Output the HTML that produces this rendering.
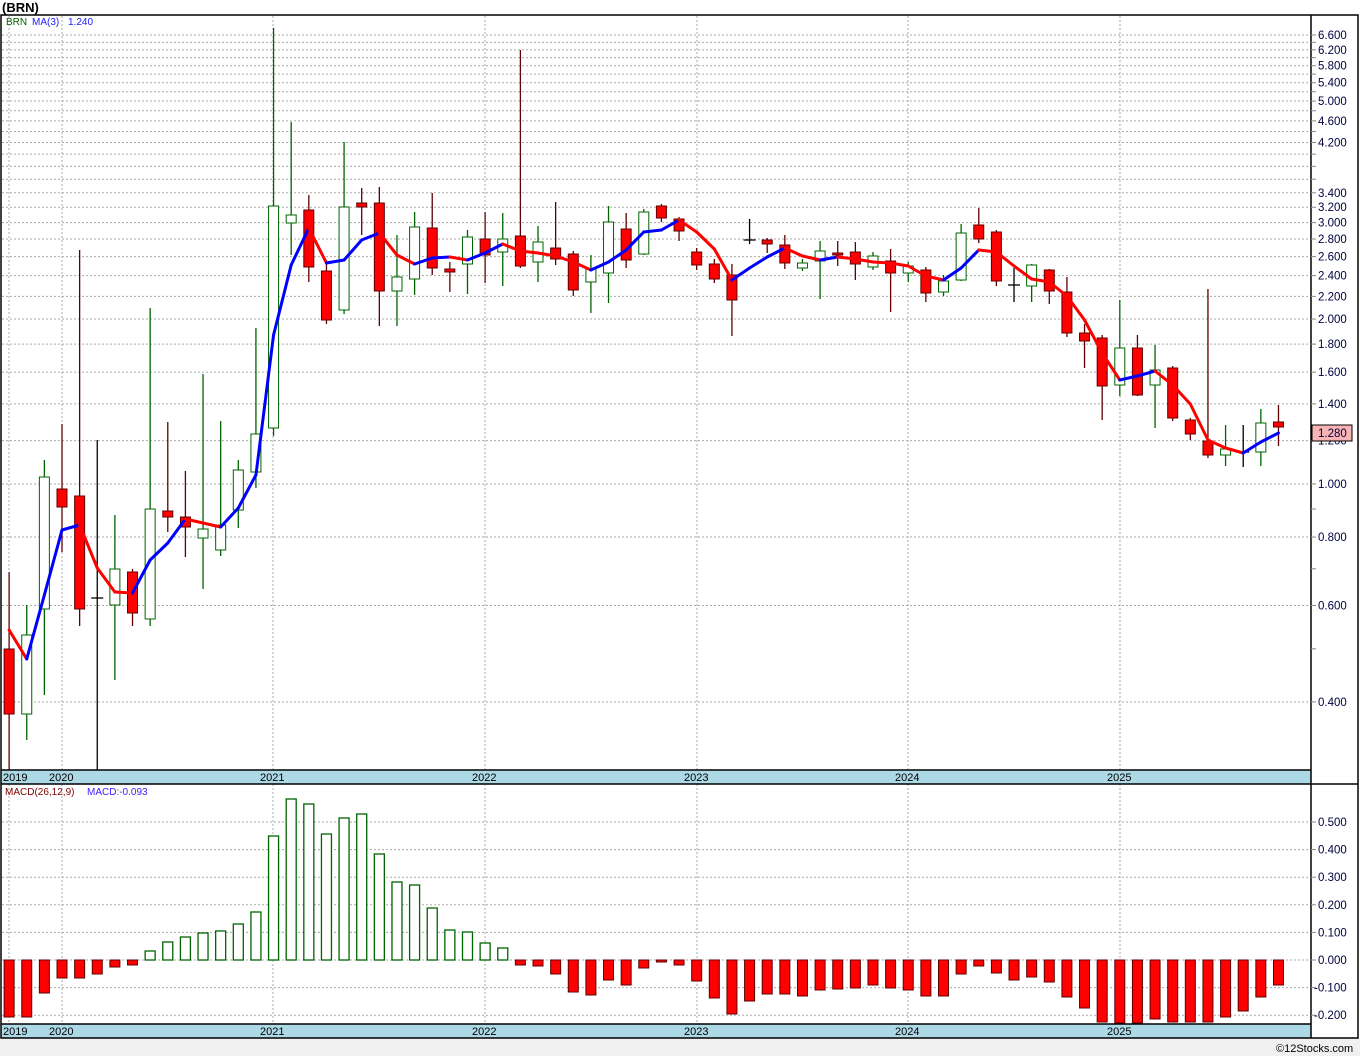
<!DOCTYPE html>
<html><head><meta charset="utf-8"><style>
html,body{margin:0;padding:0;background:#fff;}
body{width:1360px;height:1056px;overflow:hidden;font-family:"Liberation Sans",sans-serif;}
svg{display:block}
</style></head><body>
<svg id="s" width="1360" height="1056" xmlns="http://www.w3.org/2000/svg" font-family="Liberation Sans, sans-serif">
<rect x="0" y="0" width="1360" height="1056" fill="#fff"/>
<rect x="0" y="1038" width="1360" height="18" fill="#f0f0f0"/>
<text x="2" y="12" font-size="13" font-weight="bold" fill="#000">(BRN)</text>
<g id="grid"></g>
<g id="cand"></g>
<g id="ma"></g>
<g id="macd"></g>
<rect x="1" y="770" width="1310" height="14" fill="#add8e6"/>
<rect x="1" y="1024" width="1310" height="14" fill="#add8e6"/>
<g font-size="11" fill="#000">
<text x="3" y="781">2019</text><text x="49" y="781">2020</text><text x="260" y="781">2021</text><text x="472" y="781">2022</text><text x="684" y="781">2023</text><text x="895" y="781">2024</text><text x="1107" y="781">2025</text>
<text x="3" y="1035">2019</text><text x="49" y="1035">2020</text><text x="260" y="1035">2021</text><text x="472" y="1035">2022</text><text x="684" y="1035">2023</text><text x="895" y="1035">2024</text><text x="1107" y="1035">2025</text>
</g>
<g fill="none" stroke="#000" stroke-width="1.5">
<rect x="1" y="15" width="1357" height="1023"/>
<line x1="1" y1="770" x2="1311" y2="770"/>
<line x1="1" y1="784" x2="1358" y2="784"/>
<line x1="1" y1="1024" x2="1311" y2="1024"/>
<line x1="1311" y1="15" x2="1311" y2="1038"/>
</g>
<text x="6" y="25" font-size="10" fill="#006400">BRN</text>
<text x="32" y="25" font-size="10" fill="#2020ff">MA(3)</text>
<text x="68" y="25" font-size="10" fill="#2020ff">1.240</text>
<text x="5" y="795" font-size="10" fill="#800000">MACD(26,12,9)</text>
<text x="87" y="795" font-size="10" fill="#4020ff">MACD:-0.093</text>
<g id="axis" font-size="11.5" fill="#000040"></g>
<rect x="1312" y="425" width="40" height="16" fill="#f8b4b4" stroke="#000" stroke-width="1"/>
<text x="1318" y="437" font-size="11.5" fill="#000040">1.280</text>
<text x="1276" y="1052" font-size="11" fill="#000">©12Stocks.com</text>
</svg>
<script>
var NS="http://www.w3.org/2000/svg";
function el(p,t,a){var e=document.createElementNS(NS,t);for(var k in a)e.setAttribute(k,a[k]);document.getElementById(p).appendChild(e);return e;}
function py(p){return 35+(Math.log10(6.6)-Math.log10(p))*547.8;}
var grid="grid",ax="axis";
// price grid
for(var v=4;v<=66;v+=2){var p=v/10,y=py(p);
 el(grid,"line",{x1:2,x2:1310,y1:y,y2:y,stroke:"#aaa","stroke-dasharray":"2,2","stroke-width":1});
 el(ax,"line",{x1:1311,x2:1316,y1:y,y2:y,stroke:"#888"});
 var lab=[4,6,8,10,12,14,16,18,20,22,24,26,28,30,32,34,42,46,50,54,58,62,66];
 if(lab.indexOf(v)>=0){var t=el(ax,"text",{x:1318,y:y+4});t.textContent=p.toFixed(3);}
}
[0.5,0.7,0.9].forEach(function(p){var y=py(p);el(ax,"line",{x1:1311,x2:1316,y1:y,y2:y,stroke:"#888"});});
// vertical grid
[9,62,273,485,697,908,1120].forEach(function(x){
 el(grid,"line",{x1:x,x2:x,y1:16,y2:770,stroke:"#aaa","stroke-dasharray":"2,2"});
 el(grid,"line",{x1:x,x2:x,y1:784,y2:1038,stroke:"#aaa","stroke-dasharray":"2,2"});
});
// macd grid
for(var k=-2;k<=5;k++){var y=960-k*27.6;
 el(grid,"line",{x1:2,x2:1310,y1:y,y2:y,stroke:"#aaa","stroke-dasharray":"2,2"});
 el(ax,"line",{x1:1311,x2:1316,y1:y,y2:y,stroke:"#888"});
 var t=el(ax,"text",{x:k<0?1314:1318,y:y+4});t.textContent=(k<0?"-":"")+(Math.abs(k)/10).toFixed(3);
}
// candles: [type, bodyTop, bodyBot, wickTop, wickBot] type u=up d=down x=doji
var C=[["d",649,714,572,770],["u",635,714,605,740],["u",477,609,460,695],["d",489,507,424,552],["d",496,609,250,626],["x",598,598,440,770],
["u",569,605,515,680],["d",572,613,569,626],["u",509,619,308,626],["d",511,517,422,532],["d",517,527,471,557],["u",529,538,374,589],
["u",525,550,421,556],["u",470,510,460,528],["u",434,472,328,488],["u",206,428,28,436],["u",215,223,122,255],["d",210,267,195,282],
["d",271,320,260,324],["u",207,310,142,314],["d",203,207,188,235],["d",203,291,187,326],["u",277,291,235,326],["u",227,279,212,295],
["d",228,268,193,275],["d",269,272,262,292],["u",237,264,230,294],["d",239,255,212,283],["u",239,252,213,286],["d",236,266,50,268],
["u",242,262,226,282],["d",248,259,202,265],["d",254,290,251,296],["u",269,282,255,313],["u",222,273,206,303],["d",229,260,213,268],
["u",212,254,209,255],["d",206,218,204,222],["d",219,231,217,241],["d",252,265,248,270],["d",264,279,259,283],["d",275,300,264,336],
["x",240,240,219,244],["d",240,244,238,253],["d",245,263,235,269],["u",263,268,259,271],["u",251,261,241,299],["d",253,255,241,266],
["d",252,264,242,280],["u",256,267,252,270],["d",261,273,249,312],["u",266,273,262,282],["d",270,293,267,302],["u",281,292,275,296],
["u",233,280,224,281],["d",225,239,208,243],["d",232,281,230,286],["x",285,285,268,302],["u",265,286,264,302],["d",270,291,269,304],
["d",292,333,277,337],["d",333,341,324,368],["d",338,386,335,420],["u",348,385,300,396],["d",348,395,335,396],["u",370,385,345,428],
["d",368,418,366,421],["d",420,434,418,440],["d",441,455,289,458],["u",449,455,425,466],["x",452,452,425,467],["u",423,452,409,466],["d",422,427,405,446]];
function cx(i){return 62+(i-3)*17.63;}
C.forEach(function(c,i){var x=cx(i);
 var wc=c[0]=="u"?"#006400":(c[0]=="d"?"#600000":"#000");
 el("cand","line",{x1:x,x2:x,y1:c[3],y2:c[4],stroke:wc,"stroke-width":1.3});
 if(c[0]=="x"){el("cand","line",{x1:x-6,x2:x+6,y1:c[1],y2:c[1],stroke:"#000","stroke-width":1.3});}
 else el("cand","rect",{x:x-5,y:c[1],width:10,height:Math.max(2,c[2]-c[1]),fill:c[0]=="u"?"#fff":"#f00",stroke:c[0]=="u"?"#006400":"#600000","stroke-width":1});
});
// MA
var M=[630,659,595,530,525,568,592,593,560,543,519,523,527,508,475,335,265,228,263,260,240,233,255,264,258,257,260,253,244,251,253,256,262,270,262,250,232,230,220,232,249,280,268,257,248,256,260,257,259,262,263,266,276,280,268,250,252,266,279,282,296,320,353,380,376,371,385,404,440,448,453,442,433];
for(var i=0;i<M.length-1;i++){
 el("ma","line",{x1:cx(i),y1:M[i],x2:cx(i+1),y2:M[i+1],stroke:M[i+1]<M[i]?"#0000ff":"#ff0000","stroke-width":3,"stroke-linecap":"round"});
}
// MACD bars
var B=[1017,1017,993,978,978,974,967,965,951,942,937,933,931,924,912,836,799,804,834,818,814,854,882,885,908,930,932,943,948,965,966,974,992,995,980,985,968,962,965,981,998,1014,1001,994,994,996,990,989,988,985,988,990,996,996,974,966,973,980,977,982,997,1008,1022,1024,1024,1019,1022,1022,1022,1017,1011,997,985];
B.forEach(function(b,i){var x=cx(i);
 if(b<960)el("macd","rect",{x:x-5,y:b,width:10,height:960-b,fill:"#fff",stroke:"#006400","stroke-width":1.3});
 else el("macd","rect",{x:x-5,y:960,width:10,height:Math.min(b,1023)-960,fill:"#f00",stroke:"#600000","stroke-width":1});
});
</script>
</body></html>
